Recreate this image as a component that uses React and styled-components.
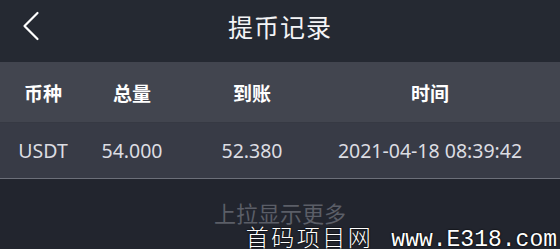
import React from "react";
import styled, { createGlobalStyle } from "styled-components";

const GlobalStyle = createGlobalStyle`
  html, body {
    margin: 0;
    padding: 0;
    background: #22252e;
  }
  body {
    font-family: "Noto Sans", "Noto Sans CJK SC", sans-serif;
  }
`;

const Page = styled.div`
  position: relative;
  width: 560px;
  height: 249px;
  overflow: hidden;
  background: #22252e;
`;

const TopBar = styled.header`
  height: 62px;
  box-sizing: border-box;
  padding-bottom: 10px;
  display: grid;
  grid-template-columns: 70px 1fr 70px;
  align-items: center;
  background: #252932;
`;

const BackButton = styled.button`
  width: 40px;
  height: 40px;
  margin-left: 11px;
  padding: 0;
  border: none;
  background: transparent;
  display: flex;
  align-items: center;
  justify-content: center;
  cursor: pointer;
`;

const Title = styled.h1`
  margin: 0;
  text-align: center;
  color: #f4f4f6;
  font-size: 25px;
  font-weight: 400;
  letter-spacing: 1px;
  font-family: "Noto Sans CJK SC", sans-serif;
`;

const Row = styled.div`
  display: grid;
  grid-template-columns: 86px 92px 148px 1fr;
  padding-right: 26px;
  align-items: center;
  height: ${(p) => p.$height}px;
  background: ${(p) => p.$bg};
  border-bottom: 1px solid ${(p) => p.$line};
`;

const HeadCell = styled.div`
  text-align: center;
  color: #ffffff;
  font-size: 19px;
  font-weight: 700;
  font-family: "Noto Sans CJK SC", sans-serif;
`;

const Cell = styled.div`
  text-align: center;
  color: #dcdde2;
  font-size: 19.5px;
  font-family: "Noto Sans", "Noto Sans CJK SC", sans-serif;
  white-space: nowrap;
`;

const MoreHint = styled.div`
  padding-top: 20px;
  line-height: 26px;
  text-align: center;
  color: #5b5e67;
  font-size: 22px;
  font-family: "Noto Sans CJK SC", sans-serif;
`;

const Watermark = styled.div`
  position: absolute;
  right: 3px;
  bottom: -4px;
  display: flex;
  align-items: baseline;
  gap: 18px;
  color: #ffffff;
  text-shadow: 0 0 2px #000, 0 0 1px #000;
  white-space: nowrap;
`;

const MarkCn = styled.span`
  font-family: "Noto Sans CJK SC", sans-serif;
  font-weight: 300;
  font-size: 23px;
  letter-spacing: 2.5px;
`;

const MarkEn = styled.span`
  font-family: "Liberation Mono", monospace;
  font-size: 23px;
`;

const records = [
  { coin: "USDT", total: "54.000", received: "52.380", time: "2021-04-18 08:39:42" },
];

export default function App() {
  return (
    <Page>
      <GlobalStyle />
      <TopBar>
        <BackButton aria-label="back">
          <svg width="18" height="30" viewBox="0 0 18 30">
            <polyline
              points="15.5,2 2.5,15 15.5,28"
              fill="none"
              stroke="#ffffff"
              strokeWidth="2.2"
              strokeLinecap="round"
              strokeLinejoin="round"
            />
          </svg>
        </BackButton>
        <Title>提币记录</Title>
        <div />
      </TopBar>
      <Row $height={60} $bg="#42454f" $line="#363943">
        <HeadCell>币种</HeadCell>
        <HeadCell>总量</HeadCell>
        <HeadCell>到账</HeadCell>
        <HeadCell>时间</HeadCell>
      </Row>
      {records.map((r) => (
        <Row key={r.time} $height={55} $bg="#383b46" $line="#6c6f79">
          <Cell>{r.coin}</Cell>
          <Cell>{r.total}</Cell>
          <Cell>{r.received}</Cell>
          <Cell>{r.time}</Cell>
        </Row>
      ))}
      <MoreHint>上拉显示更多</MoreHint>
      <Watermark>
        <MarkCn>首码项目网</MarkCn>
        <MarkEn>www.E318.com</MarkEn>
      </Watermark>
    </Page>
  );
}
